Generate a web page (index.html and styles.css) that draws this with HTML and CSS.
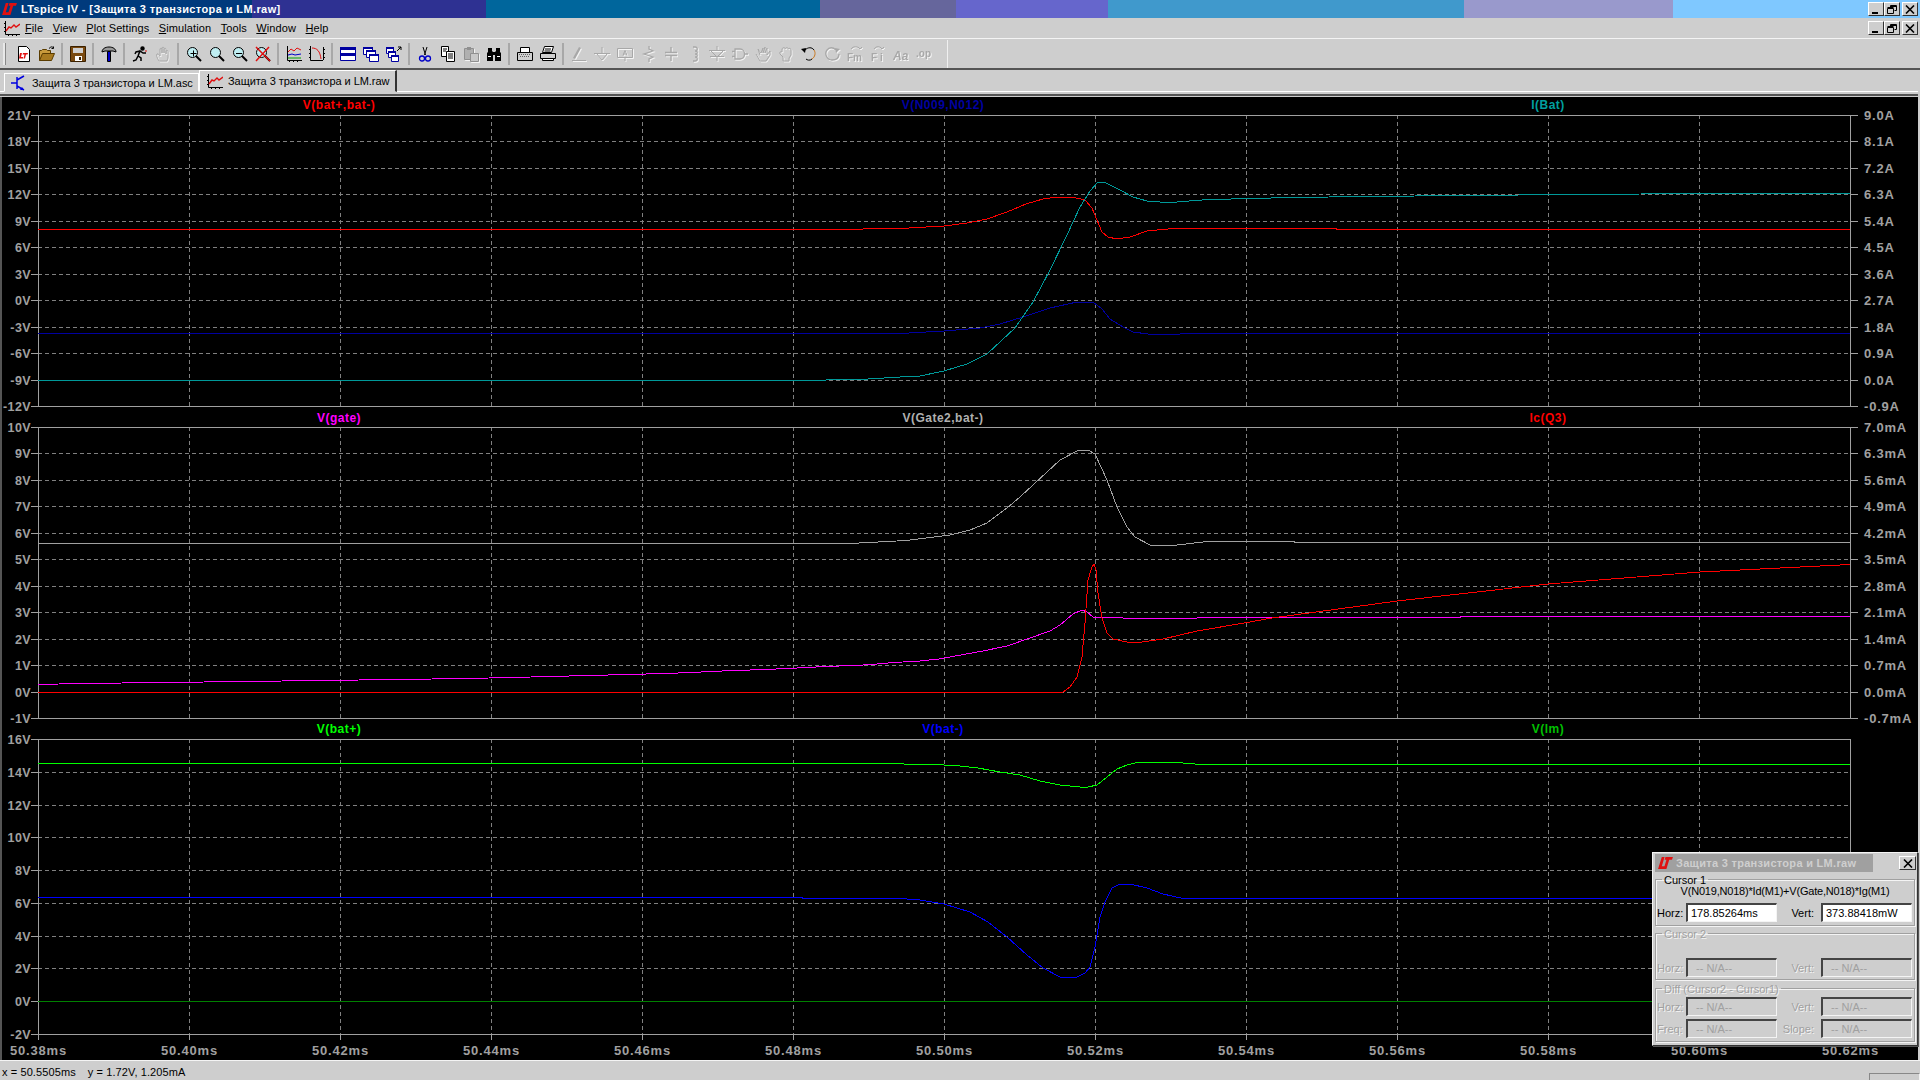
FILE: index.html
```html
<!DOCTYPE html>
<html lang="en">
<head>
    <meta charset="UTF-8">
    <title>LTspice IV - [Защита 3 транзистора и LM.raw]</title>
    <link rel="stylesheet" href="styles.css">
</head>
<body>
    <!-- Shared icon shapes -->
    <svg class="defs" width="0" height="0">
        <symbol id="lt" viewBox="0 0 16 14">
            <path fill="#e01010" d="M4 0h3L4 10h4l-1 3H0zM8 0h8l-1 3h-3L9 13H6l3-10H7z"/>
        </symbol>
        <symbol id="wave" viewBox="0 0 16 16">
            <path fill="none" stroke="#000" d="M1.500 1v13.500H16M0 3.500h1.500M0 7.500h1.500M0 11.500h1.500M4.500 15v1M8.500 15v1M12.500 15v1"/>
            <path fill="none" stroke="#e01010" stroke-width="1.400" d="M2 11l3-4 2 1 3-3 2 2 4-3"/>
        </symbol>
        <symbol id="btn-min" viewBox="0 0 10 9"><path d="M1 7h6v2H1z"/></symbol>
        <symbol id="btn-restore" viewBox="0 0 10 9">
            <path fill="none" stroke="#000" d="M3.500 2.500v-2h6v5h-2M.5 3.500h6v5h-6zM.5 2.500h6M3.500 1.500h6"/>
        </symbol>
        <symbol id="btn-close" viewBox="0 0 10 9">
            <path fill="none" stroke="#000" stroke-width="1.600" d="M1 .5l8 8M9 .5l-8 8"/>
        </symbol>
        <symbol id="lens" viewBox="0 0 16 16">
            <circle cx="6.500" cy="6.500" r="5" fill="#bfeef2" stroke="#000"/>
            <path stroke="#000" stroke-width="2" d="M10 10l5 5"/>
        </symbol>
    </svg>

    <div class="title-bar">
        <div class="title-stripes">
            <span class="stripe s0"></span><span class="stripe s1"></span><span class="stripe s2"></span><span class="stripe s3"></span>
            <span class="stripe s4"></span><span class="stripe s5"></span><span class="stripe s6"></span><span class="stripe s7"></span>
        </div>
        <svg class="lt-logo"><use href="#lt"/></svg>
        <span class="title-text">LTspice IV - [Защита 3 транзистора и LM.raw]</span>
        <div class="win-btns">
            <span class="win-btn"><svg><use href="#btn-min"/></svg></span><span class="win-btn"><svg><use href="#btn-restore"/></svg></span><span class="win-btn close"><svg><use href="#btn-close"/></svg></span>
        </div>
    </div>

    <div class="menu-bar">
        <svg class="menu-icon"><use href="#wave"/></svg>
        <span class="menu-item"><u>F</u>ile</span>
        <span class="menu-item"><u>V</u>iew</span>
        <span class="menu-item"><u>P</u>lot Settings</span>
        <span class="menu-item"><u>S</u>imulation</span>
        <span class="menu-item"><u>T</u>ools</span>
        <span class="menu-item"><u>W</u>indow</span>
        <span class="menu-item"><u>H</u>elp</span>
        <div class="win-btns">
            <span class="win-btn"><svg><use href="#btn-min"/></svg></span><span class="win-btn"><svg><use href="#btn-restore"/></svg></span><span class="win-btn close"><svg><use href="#btn-close"/></svg></span>
        </div>
    </div>

    <div class="tool-bar">
        <span class="tool-grip"></span>
        <span class="tool"><svg viewBox="0 0 16 16"><path fill="#fff" stroke="#000" d="M2.500.5h8l3 3v12h-11z"/><path fill="#e01010" d="M4 7h2l-1 4h2v1.500H3zM7 7h5l-.5 1.500H10L9 12.500H7.500L8.500 8.500H6.500z"/></svg></span>
        <span class="tool"><svg viewBox="0 0 16 16"><path fill="#c89a3c" stroke="#5a3c00" d="M.5 14.500v-10h2l1-1h4l1 1h3v3"/><path fill="#a87a20" stroke="#5a3c00" d="M.5 14.500l3-7h12l-3 7z"/><path fill="none" stroke="#000" d="M10 2.500c2-2 3-2 4-1M14.500 .5v2h-2"/></svg></span>
        <span class="tool-sep"></span>
        <span class="tool"><svg viewBox="0 0 16 16"><path fill="#7a4a10" stroke="#3a2000" d="M.5.5h15v15H.5z"/><path fill="#cfcfcf" d="M3 2h10v5H3z"/><path fill="#fff" d="M5 10h7v5H5z"/><path fill="#3a2000" d="M9 11h2v3H9z"/></svg></span>
        <span class="tool-sep"></span>
        <span class="tool"><svg viewBox="0 0 16 16"><path fill="#9a9a9a" stroke="#000" d="M1 6c0-3 3-5 7-5s7 2 7 5l-3-1H4z"/><path fill="#0000c8" stroke="#000" d="M6.500 5.500h3v10h-3z"/></svg></span>
        <span class="tool-sep"></span>
        <span class="tool"><svg viewBox="0 0 16 16"><g fill="none" stroke="#000" stroke-width="1.500"><circle cx="10.500" cy="2.500" r="1.500" fill="#000"/><path d="M1 15l3-1 2-4 3 2v3M6 10l2-5 3 2 3 0M8 5L4 6 3 8"/></g><path stroke="#e01010" d="M13 5l2 0"/></svg></span>
        <span class="tool off"><svg viewBox="0 0 16 16"><path fill="none" stroke="#a8a8a8" d="M4 15C2 12 1 9 2 8s2 1 3 2V3c0-1 2-1 2 0v4V2c0-1 2-1 2 0v5V3c0-1 2-1 2 0v5-3c0-1 2-1 2 0v6c0 2-1 3-1 4z"/></svg></span>
        <span class="tool-sep"></span>
        <span class="tool"><svg><use href="#lens"/><path stroke="#000" d="M3.500 6.500h6M6.500 3.500v6" transform="translate(1 1)"/></svg></span>
        <span class="tool"><svg><use href="#lens"/></svg></span>
        <span class="tool"><svg><use href="#lens"/><path stroke="#000" d="M4 7.500h6"/></svg></span>
        <span class="tool"><svg><use href="#lens"/><path stroke="#e01010" stroke-width="1.500" d="M1 1l14 14M14 1L1 15"/></svg></span>
        <span class="tool-sep"></span>
        <span class="tool"><svg viewBox="0 0 16 16"><path fill="none" stroke="#000" d="M1.500 0v14.500H16M3.500 15v1M7.500 15v1M11.500 15v1"/><path fill="none" stroke="#e01010" d="M2 6l3-3 3 2 3-3 4 2"/><path fill="none" stroke="#0000c8" d="M2 9l4-1 3 1 6-1"/><path fill="none" stroke="#00a000" d="M2 12h13"/></svg></span>
        <span class="tool"><svg viewBox="0 0 16 16"><path fill="none" stroke="#000" d="M1.500 0v14.500H14M0 3.500h1.500M0 7.500h1.500M0 11.500h1.500M14.500 1v13M14.500 3.500h1.500M14.500 7.500h1.500M14.500 11.500h1.500"/><path fill="none" stroke="#e01010" d="M3 2c5 0 8 3 9 11"/></svg></span>
        <span class="tool-sep"></span>
        <span class="tool"><svg viewBox="0 0 16 16"><path fill="#fff" stroke="#0000a0" d="M.5 1.500h15v13H.5z"/><path fill="#0000a0" d="M0 1h16v3H0zM0 7h16v3H0z"/></svg></span>
        <span class="tool"><svg viewBox="0 0 16 16"><g fill="#fff" stroke="#0000a0"><path d="M.5 1.500h9v7h-9z"/><path d="M3.500 4.500h9v7h-9z"/><path d="M6.500 8.500h9v7h-9z"/></g><path fill="#0000a0" d="M0 1h10v2H0zM3 4h10v2H3zM6 8h10v2H6z"/></svg></span>
        <span class="tool"><svg viewBox="0 0 16 16"><g fill="#fff" stroke="#0000a0"><path d="M.5 1.500h7v6h-7z"/><path d="M2.500 5.500h7v6h-7z"/><path d="M5.500 9.500h7v6h-7z"/></g><path fill="#0000a0" d="M0 1h8v2H0zM2 5h8v2H2zM5 9h8v2H5z"/><path fill="none" stroke="#000" d="M11 5l4-4M12 1h3v3"/></svg></span>
        <span class="tool-sep"></span>
        <span class="tool"><svg viewBox="0 0 16 16"><path fill="none" stroke="#000" d="M6 1l2.500 8M10 1L7.500 9"/><g fill="none" stroke="#0000c8" stroke-width="1.300"><circle cx="5" cy="12.500" r="2.500"/><circle cx="11" cy="12.500" r="2.500"/></g></svg></span>
        <span class="tool"><svg viewBox="0 0 16 16"><path fill="#fff" stroke="#000" d="M1.500.5h7v10h-7z"/><path fill="#fff" stroke="#000" d="M6.500 5.500h8v10h-8z"/><path stroke="#000" d="M3 3h4M3 5h3M8 8h5M8 10h5M8 12h5"/></svg></span>
        <span class="tool off"><svg viewBox="0 0 16 16"><path fill="#b0b0b0" stroke="#909090" d="M1.500 2.500h9v11h-9z"/><path fill="#c8c8c8" stroke="#909090" d="M7.500 7.500h8v8h-8z"/><path fill="#909090" d="M4 1h4v3H4z"/></svg></span>
        <span class="tool"><svg viewBox="0 0 16 16"><path fill="#000" d="M2 2h4v3l1 1v9H1V7l1-1zM10 2h4v4l1 1v8H9V6l1-1zM7 6h2v3H7z"/><path fill="#fff" d="M2 10h3v1H2zM11 10h3v1h-3z"/></svg></span>
        <span class="tool-sep"></span>
        <span class="tool"><svg viewBox="0 0 16 16"><path fill="#fff" stroke="#000" d="M3.500 1.500h9v5h-9z"/><path fill="#cfcfcf" stroke="#000" d="M.5 6.500h15v8H.5z"/><path fill="#606060" d="M2 8h1v1H2zM4 8h1v1H4zM6 8h1v1H6zM8 8h1v1H8zM10 8h1v1h-1zM12 8h1v1h-1zM3 10h1v1H3zM5 10h1v1H5zM7 10h1v1H7zM9 10h1v1H9zM11 10h1v1h-1z"/></svg></span>
        <span class="tool"><svg viewBox="0 0 16 16"><path fill="#fff" stroke="#000" d="M4.500.5h9l-2 6h-9z"/><path fill="#cfcfcf" stroke="#000" d="M.5 7.500h15v5H.5z"/><path fill="#fff" stroke="#000" d="M2.500 12.500h11v2h-11z"/><path stroke="#000" d="M5 3h6M4.500 5h6"/></svg></span>
        <span class="tool-sep"></span>
        <span class="tool off"><svg viewBox="0 0 16 16"><path fill="#a8a8a8" d="M2 12l6-11 2 1-6 11z"/><path stroke="#a8a8a8" d="M1 14.500h14"/></svg></span>
        <span class="tool off"><svg viewBox="0 0 16 16"><path fill="none" stroke="#a8a8a8" d="M8 1v6M0 7.500h16M3 8l5 6 5-6"/></svg></span>
        <span class="tool off"><svg viewBox="0 0 16 16"><path fill="none" stroke="#a8a8a8" d="M.5 2.500h15v9H.5zM8 12v3"/><path fill="none" stroke="#a8a8a8" d="M6 9.500l2-5 2 5M6.500 8h3"/></svg></span>
        <span class="tool off"><svg viewBox="0 0 16 16"><path fill="none" stroke="#a8a8a8" stroke-width="1.300" d="M9 0v3l4 2-9 3 9 3-4 2v3"/></svg></span>
        <span class="tool off"><svg viewBox="0 0 16 16"><path fill="none" stroke="#a8a8a8" stroke-width="1.400" d="M8 1v5M2 6.500h12M2 9.500h12M8 10v5"/></svg></span>
        <span class="tool off"><svg viewBox="0 0 16 16"><path fill="none" stroke="#a8a8a8" stroke-width="1.300" d="M7 1h2c3 0 3 4 0 4 3 0 3 3 0 3 3 0 3 3 0 3 3 0 3 4 0 4H7"/></svg></span>
        <span class="tool off"><svg viewBox="0 0 16 16"><path fill="none" stroke="#a8a8a8" d="M8 0v4M0 4.500h16M2 5l6 6 6-6M1 10.500h14M8 11v4"/></svg></span>
        <span class="tool off"><svg viewBox="0 0 16 16"><path fill="none" stroke="#a8a8a8" stroke-width="1.300" d="M3 3h5c6 0 6 10 0 10H3zM0 5.500h3M0 10.500h3M12 8h4"/></svg></span>
        <span class="tool off"><svg viewBox="0 0 16 16"><path fill="none" stroke="#a8a8a8" d="M5 15L1 8M5 15h6l4-6V5L12 9V2L10 7V1L8 7V2L6 7 3 3l2 6"/></svg></span>
        <span class="tool off"><svg viewBox="0 0 16 16"><path fill="none" stroke="#a8a8a8" d="M5 15V11L2 8c-1-2 1-3 2-2V3c1-2 3-2 3 0 1-2 3-2 3 0 1-1 3-1 3 1v5l-2 3v3z"/></svg></span>
        <span class="tool"><svg viewBox="0 0 16 16"><path fill="#000" d="M0 3l5-1-1 5z"/><path fill="none" stroke="#000" d="M4 4C7 1 11 1 13 4"/><path fill="none" stroke="#c87820" d="M13 4c2 3 1 7-2 9"/><path fill="none" stroke="#000" d="M11 13c-2 2-5 1-6 0"/></svg></span>
        <span class="tool off"><svg viewBox="0 0 16 16"><path fill="#a8a8a8" d="M16 3l-5-1 1 5z"/><path fill="none" stroke="#a8a8a8" stroke-width="1.300" d="M12 4C9 1 5 1 3 4c-3 4 0 10 5 10s7-3 7-6"/></svg></span>
        <span class="tool off"><svg viewBox="0 0 16 16"><path fill="none" stroke="#a8a8a8" d="M4 3c2-3 7-3 9 0M11 1l2 2 2-2"/><text class="tool-text" x="0" y="15">Fm</text></svg></span>
        <span class="tool off"><svg viewBox="0 0 16 16"><path fill="none" stroke="#a8a8a8" d="M4 3c2-3 6-3 8 0M10 1l2 2 2-2"/><text class="tool-text" x="1" y="15">F i</text></svg></span>
        <span class="tool off"><svg viewBox="0 0 16 16"><text class="tool-text italic" x="0" y="14">Aa</text></svg></span>
        <span class="tool off"><svg viewBox="0 0 16 16"><text class="tool-text" x="0" y="11">.op</text></svg></span>
        <span class="tool-sep last"></span>
    </div>

    <div class="tabs">
        <div class="tab-list">
            <div class="tab">
                <svg class="tab-icon" viewBox="0 0 16 16"><path fill="none" stroke="#0000e0" stroke-width="1.500" d="M6 2v12M0 8h6M6 5l7-4M6 11l7 4"/><path fill="#0000e0" d="M13 15l-4 0 2-3z"/></svg>
                Защита 3 транзистора и LM.asc
            </div>
            <div class="tab active">
                <svg class="tab-icon"><use href="#wave"/></svg>
                Защита 3 транзистора и LM.raw
            </div>
        </div>
        <div class="tab-edge"></div>
    </div>

    <div class="main">
        <svg id="plots" class="plots" viewBox="2 97 1916 963"></svg>

        <!-- Cursor readout window -->
        <div class="cursor-win">
            <div class="cursor-title">
                <svg class="lt-logo small"><use href="#lt"/></svg>
                <span>Защита 3 транзистора и LM.raw</span>
            </div>
            <span class="win-btn close cursor-close"><svg><use href="#btn-close"/></svg></span>

            <fieldset class="group g1">
                <legend>Cursor 1</legend>
                <div class="expr">V(N019,N018)*Id(M1)+V(Gate,N018)*Ig(M1)</div>
                <div class="row">
                    <label>Horz:</label><input value="178.85264ms" readonly>
                    <label>Vert:</label><input value="373.88418mW" readonly>
                </div>
            </fieldset>

            <fieldset class="group g2 dim">
                <legend>Cursor 2</legend>
                <div class="row">
                    <label>Horz:</label><input value="-- N/A--" disabled>
                    <label>Vert:</label><input value="-- N/A--" disabled>
                </div>
            </fieldset>

            <fieldset class="group g3 dim">
                <legend>Diff (Cursor2 - Cursor1)</legend>
                <div class="row">
                    <label>Horz:</label><input value="-- N/A--" disabled>
                    <label>Vert:</label><input value="-- N/A--" disabled>
                </div>
                <div class="row">
                    <label>Freq:</label><input value="-- N/A--" disabled>
                    <label>Slope:</label><input value="-- N/A--" disabled>
                </div>
            </fieldset>
        </div>
    </div>

    <div class="status-bar">
        <span class="status-x">x = 50.5505ms</span>
        <span>y = 1.72V, 1.205mA</span>
        <span class="status-cell"></span>
    </div>

    <script src="script.js"></script>
</body>
</html>
```

FILE: styles.css
```css
* {
    box-sizing: border-box;
}

body {
    margin: 0;
    height: 1080px;
    overflow: hidden;
    background: #cecece;
    color: #000;
    font-family: "Liberation Sans", Arial, sans-serif;
    font-size: 11px;
}

.defs {
    position: absolute;
}

svg {
    display: block;
}

/* Title bar */
.title-bar {
    position: relative;
    height: 18px;
    display: flex;
    align-items: center;
    padding-left: 2px;
    color: #fff;
    font-weight: bold;
    font-size: 11px;
}

.title-stripes {
    position: absolute;
    inset: 0;
    display: flex;
}

.stripe { display: block; }
.s0 { width: 252px; background: #003a7c; }
.s1 { width: 234px; background: #2e3192; }
.s2 { width: 334px; background: #00669c; }
.s3 { width: 136px; background: #66669c; }
.s4 { width: 152px; background: #6666cc; }
.s5 { width: 356px; background: #4099cc; }
.s6 { width: 209px; background: #9999cc; }
.s7 { flex: 1; background: #7fc8ff; }

.lt-logo {
    position: relative;
    width: 15px;
    height: 13px;
    margin-right: 4px;
}

.title-text {
    position: relative;
    letter-spacing: 0.4px;
}

.win-btns {
    position: relative;
    margin-left: auto;
    margin-right: 2px;
    display: flex;
}

.win-btn {
    width: 16px;
    height: 14px;
    background: #cecece;
    border: 1px solid;
    border-color: #fff #333 #333 #fff;
    display: flex;
    align-items: center;
    justify-content: center;
}

.win-btn svg {
    width: 10px;
    height: 9px;
}

.win-btn.close {
    margin-left: 2px;
}

/* Menu */
.menu-bar {
    height: 20px;
    display: flex;
    align-items: center;
    padding-left: 4px;
    font-size: 11px;
    letter-spacing: 0.1px;
}

.menu-icon {
    width: 16px;
    height: 16px;
    margin-right: 5px;
}

.menu-item {
    margin-right: 9.5px;
}

/* Toolbar */
.tool-bar {
    height: 32px;
    border-top: 1px solid #f4f4f4;
    border-bottom: 2px solid #555;
    display: flex;
    align-items: center;
    padding-left: 12px;
    position: relative;
}

.tool-grip {
    position: absolute;
    left: 3px;
    top: 4px;
    bottom: 3px;
    width: 3px;
    background: #e8e8e8;
    border-right: 1px solid #888;
}

.tool {
    width: 23px;
    height: 16px;
    display: flex;
    justify-content: center;
}

.tool svg {
    width: 16px;
    height: 16px;
}

.tool.off svg {
    filter: drop-shadow(1px 1px 0 #f4f4f4);
}

.tool-text {
    font-size: 10px;
    font-weight: bold;
    fill: #a8a8a8;
}

.tool-text.italic {
    font-size: 12px;
    font-style: italic;
}

.tool-sep {
    width: 8px;
    height: 22px;
    margin: 0;
    background: linear-gradient(#a8a8a8, #a8a8a8) center / 2px 100% no-repeat;
}

.tool-sep.last {
    margin-left: 8px;
    height: 28px;
    background: linear-gradient(#f0f0f0, #f0f0f0) center / 1px 100% no-repeat;
}

/* Tabs */
.tabs {
    height: 27px;
    padding: 0 2px 0 0;
}

.tab-list {
    height: 22px;
    display: flex;
    align-items: flex-end;
    padding-left: 4px;
    border-bottom: 1px solid #fff;
}

.tab {
    width: 195px;
    height: 19px;
    display: flex;
    align-items: center;
    padding-left: 6px;
    gap: 5px;
    background: #cecece;
    border: 1px solid;
    border-color: #fff #fff transparent #fff;
    margin-bottom: -1px;
    letter-spacing: -0.05px;
    white-space: nowrap;
}

.tab.active {
    width: 198px;
    height: 22px;
    padding-left: 7px;
    gap: 5px;
    border-top-color: #fff;
    border-left-color: #fff;
    border-right: 2px solid #333;
}

.tab-icon {
    width: 16px;
    height: 16px;
    flex: none;
}

.tab-edge {
    margin-top: 2px;
    border-top: 2px solid #555;
}

/* Plot pane */
.main {
    position: relative;
    height: 963px;
    border-left: 2px solid #555;
    border-right: 2px solid #cecece;
}

.plots {
    width: 1916px;
    height: 963px;
    background: #000;
}

.grid {
    fill: none;
    stroke: #808080;
    stroke-dasharray: 4 3;
    shape-rendering: crispEdges;
}

.frame {
    fill: none;
    stroke: #a0a0a0;
    shape-rendering: crispEdges;
}

.trace {
    fill: none;
    stroke-width: 1;
    shape-rendering: crispEdges;
}

.axis-text {
    fill: #a0a0a0;
    font-size: 13px;
    font-weight: bold;
    letter-spacing: 0.8px;
}

.axis-text.left {
    font-size: 12.5px;
    letter-spacing: 0.4px;
}

.trace-name {
    font-size: 12px;
    font-weight: bold;
    letter-spacing: 0.5px;
    text-anchor: middle;
}

/* Cursor window */
.cursor-win {
    position: absolute;
    left: 1650px;
    top: 755px;
    width: 266px;
    height: 194px;
    background: #cecece;
    border: 1px solid;
    border-color: #f4f4f4 #333 #333 #f4f4f4;
    padding: 1px 2px;
    box-shadow: 1px 1px 0 #555;
}

.cursor-title {
    width: 218px;
    height: 18px;
    background: #a0a0a0;
    color: #cfcfcf;
    font-weight: bold;
    font-size: 11px;
    letter-spacing: 0.3px;
    display: flex;
    align-items: center;
    padding-left: 3px;
}

.lt-logo.small {
    margin-right: 3px;
}

.cursor-close {
    position: absolute;
    top: 3px;
    right: 1px;
    width: 17px;
}

.group {
    margin: 0;
    padding: 0 1px;
    border: 1px solid #a0a0a0;
    box-shadow: inset 1px 1px 0 #f4f4f4, 1px 1px 0 #f4f4f4;
    position: relative;
}

.group legend {
    margin-left: 5px;
    padding: 0 2px;
    height: 12px;
    line-height: 14px;
}

.g1 { height: 53px; margin-top: 1px; }
.g2 { height: 53px; margin-top: 1px; }
.g3 { height: 60px; margin-top: 2px; }

.expr {
    text-align: center;
    line-height: 12px;
    letter-spacing: -0.2px;
}

.row {
    display: grid;
    grid-template-columns: 29px 91px 44px 91px;
    height: 19px;
    align-items: center;
}

.row label {
    text-align: right;
    padding-right: 4px;
}

.row label:nth-of-type(2) {
    padding-right: 7px;
}

.g1 .row { margin-top: 6px; }
.g2 .row { margin-top: 19px; }
.g3 .row { margin-top: 3px; }

.row input {
    width: 91px;
    height: 19px;
    border: 1px solid;
    border-width: 2px 1px 1px 2px;
    border-color: #444 #f4f4f4 #f4f4f4 #444;
    border-radius: 0;
    outline: none;
    background: #fff;
    padding: 0 0 0 3px;
    color: #000;
    font: inherit;
}

.dim legend,
.dim label {
    color: #a0a0a0;
    text-shadow: 1px 1px 0 #f4f4f4;
}

.dim input {
    background: #cecece;
    color: #a0a0a0;
    padding-left: 8px;
    opacity: 1;
}

/* Status bar */
.status-bar {
    height: 24px;
    border-top: 1px solid #f4f4f4;
    display: flex;
    align-items: flex-start;
    padding: 5px 0 0 2px;
    font-size: 11px;
    letter-spacing: 0.1px;
    position: relative;
}

.status-x {
    margin-right: 12px;
}

.status-cell {
    position: absolute;
    left: 1869px;
    right: 0;
    top: 12px;
    bottom: 0;
    border: 1px solid;
    border-color: #888 #f4f4f4 #f4f4f4 #888;
}
```

FILE: script.js
```js
// Draws the three LTspice panes into the #plots svg. All y values are page pixels.
const NS = 'http://www.w3.org/2000/svg';
const svg = document.getElementById('plots');
const LEFT = 38, RIGHT = 1850, STEP = 151;

function add(tag, cls, attrs, text) {
    const el = document.createElementNS(NS, tag);
    if (cls) el.setAttribute('class', cls);
    for (const k in attrs) el.setAttribute(k, attrs[k]);
    if (text) el.textContent = text;
    svg.appendChild(el);
    return el;
}

const panes = [
    {
        top: 115, bottom: 406, labelY: 109,
        left: ['21V', '18V', '15V', '12V', '9V', '6V', '3V', '0V', '-3V', '-6V', '-9V', '-12V'],
        right: ['9.0A', '8.1A', '7.2A', '6.3A', '5.4A', '4.5A', '3.6A', '2.7A', '1.8A', '0.9A', '0.0A', '-0.9A'],
        names: [['V(bat+,bat-)', '#ff0000'], ['V(N009,N012)', '#0000a0'], ['I(Bat)', '#00a0a0']],
        traces: [
            ['#ff0000', [[38,229.500],[860,229.500],[866,228.500],[900,228.500],[944,226],[967,223],[987,219],[1007,212],[1026,204],[1043,199],[1057,197],[1072,197],[1085,200],[1092,208],[1097,220],[1102,232],[1108,237],[1117,239],[1130,237],[1147,231],[1173,228.500],[1336,228.500],[1337,229.500],[1850,229.500]]],
            ['#0000a0', [[38,333.500],[900,333.500],[944,331],[980,328],[1000,324],[1023,317],[1050,308],[1077,302],[1093,302],[1102,309],[1110,319],[1123,327],[1133,332],[1148,334],[1180,334],[1183,333.500],[1850,333.500]]],
            ['#009999', [[38,380.500],[793,380.500],[860,379.500],[900,377],[920,376],[944,371],[967,364],[987,354],[1015,328],[1033,302],[1050,270],[1067,235],[1080,207],[1090,191],[1098,182],[1104,182],[1120,190],[1133,197],[1147,201],[1160,202],[1177,202],[1208,199.500],[1255,198.500],[1288,197.500],[1370,196.500],[1460,195.500],[1580,194.500],[1702,193.500],[1850,193.500]]]
        ]
    },
    {
        top: 427, bottom: 718, labelY: 422,
        left: ['10V', '9V', '8V', '7V', '6V', '5V', '4V', '3V', '2V', '1V', '0V', '-1V'],
        right: ['7.0mA', '6.3mA', '5.6mA', '4.9mA', '4.2mA', '3.5mA', '2.8mA', '2.1mA', '1.4mA', '0.7mA', '0.0mA', '-0.7mA'],
        names: [['V(gate)', '#ff00ff'], ['V(Gate2,bat-)', '#b0b0b0'], ['Ic(Q3)', '#ff0000']],
        traces: [
            ['#a0a0a0', [[38,543.500],[850,543.500],[906,540.500],[950,535],[970,530],[987,523],[1007,508],[1020,497],[1047,472],[1060,460],[1077,451],[1088,450],[1095,454],[1107,480],[1117,507],[1127,527],[1135,537],[1150,545],[1177,545],[1207,541.500],[1294,541.500],[1295,542.500],[1850,542.500]]],
            ['#ff00ff', [[38,684.500],[80,683.500],[164,682.500],[244,681.500],[320,680.500],[399,679.500],[466,678.500],[512,677.500],[550,676.500],[589,675.500],[628,674.500],[665,673.500],[691,672.500],[712,671.500],[732,670.500],[768,669.500],[785,668.500],[809,667.500],[824,666.500],[855,665.500],[872,664.500],[894,662.500],[920,661],[939,659],[950,657],[983,651],[1007,646],[1030,638],[1050,631],[1060,625],[1073,614],[1082,610],[1087,612],[1093,617],[1100,617.500],[1145,618.500],[1250,617.500],[1460,617.500],[1461,616.500],[1850,616.500]]],
            ['#ff0000', [[38,692.500],[1045,692.500],[1063,692],[1070,687],[1077,677],[1082,657],[1085,623],[1088,580],[1092,567],[1094,564],[1096,570],[1098,593],[1102,618],[1107,633],[1113,639],[1127,642],[1142,642],[1163,639],[1197,631],[1250,622],[1272,618],[1397,601],[1548,584],[1700,572],[1850,564.500]]]
        ]
    },
    {
        top: 739, bottom: 1034, labelY: 733,
        left: ['16V', '14V', '12V', '10V', '8V', '6V', '4V', '2V', '0V', '-2V'],
        names: [['V(bat+)', '#00ff00'], ['V(bat-)', '#0000ff'], ['V(lm)', '#00c000']],
        traces: [
            ['#008000', [[38,1001.500],[1850,1001.500]]],
            ['#00ff00', [[38,763.500],[900,763.500],[908,764.500],[944,765],[960,766],[978,768],[1000,772],[1020,775],[1040,781],[1060,785],[1080,787],[1088,787],[1097,785],[1107,777],[1117,769],[1127,765],[1137,762.500],[1175,762.500],[1190,763.500],[1200,764.500],[1850,764.500]]],
            ['#0000ff', [[38,897.500],[802,897.500],[803,898.500],[900,898.500],[920,900],[944,904],[970,912],[988,922],[1007,937],[1027,955],[1043,968],[1060,977],[1077,977],[1085,973],[1090,967],[1095,947],[1100,917],[1105,902],[1112,888],[1120,884],[1130,884],[1147,888],[1163,894],[1183,898.500],[1850,898.500]]]
        ]
    }
];

const nameX = [339, 943, 1548];

panes.forEach((pane) => {
    const rows = pane.left.length - 1;
    const rowH = (pane.bottom - pane.top) / rows;
    const yAt = (i) => Math.round(pane.top + i * rowH) + 0.5;
    const isLast = pane === panes[panes.length - 1];

    // dashed grid first, traces go over it
    for (let i = 1; i < 12; i++) {
        const x = LEFT + i * STEP + 0.5;
        add('line', 'grid', { x1: x, x2: x, y1: pane.top, y2: pane.bottom });
    }
    for (let i = 1; i < rows; i++) {
        add('line', 'grid', { x1: LEFT, x2: RIGHT, y1: yAt(i), y2: yAt(i) });
    }

    add('rect', 'frame', { x: LEFT + 0.5, y: pane.top + 0.5, width: RIGHT - LEFT, height: pane.bottom - pane.top });

    pane.left.forEach((label, i) => {
        const y = yAt(i);
        add('line', 'frame', { x1: 31, x2: LEFT, y1: y, y2: y });
        add('text', 'axis-text left', { x: 31, y: y + 4, 'text-anchor': 'end' }, label);
    });
    (pane.right || []).forEach((label, i) => {
        const y = yAt(i);
        add('line', 'frame', { x1: RIGHT, x2: 1858, y1: y, y2: y });
        add('text', 'axis-text', { x: 1864, y: y + 4 }, label);
    });

    pane.names.forEach((n, i) => {
        add('text', 'trace-name', { x: nameX[i], y: pane.labelY, fill: n[1] }, n[0]);
    });

    pane.traces.forEach((t) => {
        add('polyline', 'trace', { stroke: t[0], points: t[1].map((p) => p.join(',')).join(' ') });
    });

    if (isLast) {
        for (let i = 0; i <= 12; i++) {
            const x = LEFT + i * STEP + 0.5;
            add('line', 'frame', { x1: x, x2: x, y1: pane.bottom, y2: pane.bottom + 6 });
            add('text', 'axis-text', { x: x, y: 1055, 'text-anchor': 'middle' }, '50.' + (38 + i * 2) + 'ms');
        }
    }
});
```
